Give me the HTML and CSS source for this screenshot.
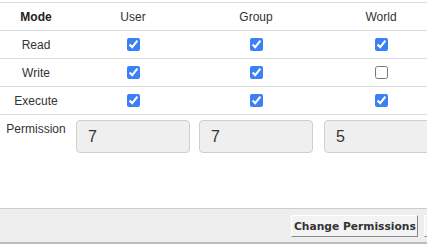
FILE: index.html
```html
<!DOCTYPE html>
<html>
<head>
<meta charset="utf-8">
<link rel="stylesheet" href="styles.css">
</head>
<body>
<div class="page">
  <div class="grid">
    <div class="row head">
      <div class="cell mode">Mode</div>
      <div class="cell">User</div>
      <div class="cell">Group</div>
      <div class="cell">World</div>
    </div>
    <div class="row">
      <div class="cell">Read</div>
      <div class="cell"><input type="checkbox" class="cb" checked></div>
      <div class="cell"><input type="checkbox" class="cb" checked></div>
      <div class="cell"><input type="checkbox" class="cb" checked></div>
    </div>
    <div class="row">
      <div class="cell">Write</div>
      <div class="cell"><input type="checkbox" class="cb" checked></div>
      <div class="cell"><input type="checkbox" class="cb" checked></div>
      <div class="cell"><input type="checkbox" class="cb"></div>
    </div>
    <div class="row">
      <div class="cell">Execute</div>
      <div class="cell"><input type="checkbox" class="cb" checked></div>
      <div class="cell"><input type="checkbox" class="cb" checked></div>
      <div class="cell"><input type="checkbox" class="cb" checked></div>
    </div>
    <div class="row perm">
      <div class="cell label">Permission</div>
      <div class="cell"><input type="text" class="num" value="7"></div>
      <div class="cell"><input type="text" class="num" value="7"></div>
      <div class="cell"><input type="text" class="num" value="5"></div>
    </div>
  </div>
  <div class="footer">
    <button class="btn">Change Permissions</button>
    <button class="btn btn-more" aria-label="Cancel"></button>
  </div>
</div>
</body>
</html>
```
FILE: styles.css
```css
html, body {
  margin: 0;
  padding: 0;
  overflow: hidden;
  background: #fff;
}
.page {
  width: 427px;
  height: 244px;
  display: flex;
  flex-direction: column;
  padding-top: 2px;
  box-sizing: border-box;
  font-family: "Liberation Sans", Arial, sans-serif;
  font-size: 12px;
  color: #333;
}
.grid {
  overflow: hidden;
}
.row {
  display: grid;
  grid-template-columns: 72px 122px 124px 126px;
  height: 28px;
  box-sizing: border-box;
  border-top: 1px solid #dcdcdc;
  align-items: center;
  width: 446px;
}
.cell {
  display: flex;
  justify-content: center;
  align-items: center;
}
.head .mode {
  font-weight: bold;
  color: #222;
}
.cb {
  margin: 0;
  width: 13px;
  height: 13px;
  accent-color: #3c80f7;
}
.perm {
  height: auto;
  align-items: start;
  padding-top: 5px;
}
.perm .label {
  padding-top: 2px;
}
.num {
  width: 114px;
  height: 33px;
  box-sizing: border-box;
  border: 1px solid #cfcfcf;
  border-radius: 4px;
  background: #efefef;
  font-family: "Liberation Sans", Arial, sans-serif;
  font-size: 16px;
  color: #333;
  padding: 0 0 0 11px;
  margin: 0;
}
.footer {
  margin-top: auto;
  height: 36px;
  box-sizing: border-box;
  border-top: 1px solid #cccccc;
  border-bottom: 2px solid #bdbdbd;
  background: #eeeeee;
  display: flex;
  justify-content: flex-start;
  align-items: flex-start;
  gap: 6px;
  padding: 6px 0 0 291px;
  overflow: hidden;
}
.btn {
  flex-shrink: 0;
  font-family: "DejaVu Sans", Verdana, sans-serif;
  font-weight: bold;
  font-size: 10.7px;
  color: #333;
  background: #f3f3f3;
  border: 1px solid;
  border-color: #ffffff #8a8a8a #8a8a8a #ffffff;
  border-radius: 0;
  height: 22px;
  width: 127px;
  padding: 0 2px;
  margin: 0;
  white-space: nowrap;
}
.btn-more {
  width: 60px;
}
```
